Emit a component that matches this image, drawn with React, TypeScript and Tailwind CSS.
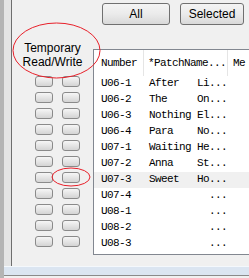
import React from "react";

const rows = [
  { num: "U06-1", a: "After", b: "Li..." },
  { num: "U06-2", a: "The", b: "On..." },
  { num: "U06-3", a: "Nothing", b: "El..." },
  { num: "U06-4", a: "Para", b: "No..." },
  { num: "U07-1", a: "Waiting", b: "He..." },
  { num: "U07-2", a: "Anna", b: "St..." },
  { num: "U07-3", a: "Sweet", b: "Ho..." },
  { num: "U07-4", a: "", b: "\u00a0\u00a0..." },
  { num: "U08-1", a: "", b: "\u00a0\u00a0..." },
  { num: "U08-2", a: "", b: "\u00a0\u00a0..." },
  { num: "U08-3", a: "", b: "\u00a0\u00a0..." },
];

const sans = "font-['Liberation_Sans',Arial,sans-serif]";
const mono = "font-['Liberation_Mono','Courier_New',monospace] text-[11px] tracking-[-0.6px]";

function SmallButton() {
  return (
    <div className="w-[18px] h-[11px] rounded-[3px] border border-[#8a8a8a] bg-gradient-to-b from-[#f6f6f6] to-[#d4d4d4]" />
  );
}

function WinButton({ label, width }: { label: string; width: string }) {
  return (
    <div
      className={`${width} h-[22px] rounded-[3px] border border-[#707070] bg-gradient-to-b from-[#f4f4f4] via-[#ebebeb] to-[#d9d9d9] flex items-center justify-center text-[12px] text-black ${sans}`}
    >
      {label}
    </div>
  );
}

export default function App() {
  return (
    <div className="relative w-[249px] h-[278px] overflow-hidden flex bg-[#f0f0f0]">
      {/* outer window edge */}
      <div className="w-[4px] h-full bg-[#b4b4b4] shrink-0" />

      <div className="flex-1 flex flex-col">
        <div className="h-[266px] flex">
          <div className="w-[7px] bg-[#e4e4e4] shrink-0" />
          <div className="w-[1px] bg-[#6e6e6e] shrink-0" />

          {/* left panel */}
          <div className="w-[81px] shrink-0 flex flex-col">
            <div className={`pt-[41px] text-center text-[12px] leading-[14px] text-black ${sans}`}>
              Temporary
              <br />
              Read/Write
            </div>
            <div className="mt-[7px] flex flex-col">
              {rows.map((r) => (
                <div key={r.num} className="h-[16px] flex gap-[9px] pl-[23px]">
                  <SmallButton />
                  <SmallButton />
                </div>
              ))}
            </div>
          </div>

          {/* right panel */}
          <div className="flex-1 flex flex-col">
            <div className="h-[49px] pt-[3px] pl-[9px] flex gap-[10px]">
              <WinButton label="All" width="w-[68px]" />
              <WinButton label="Selected" width="w-[64px]" />
            </div>

            <div className="h-[206px] border-l border-t border-b border-[#828790] bg-white flex flex-col">
              <div className={`h-[26px] flex items-center text-black ${mono}`}>
                <div className="w-[50px] pl-[7px] h-full flex items-center border-r border-[#e5e5e5]">Number</div>
                <div className="w-[84px] pl-[4px] h-full flex items-center border-r border-[#e5e5e5]">*PatchName...</div>
                <div className="pl-[5px] whitespace-nowrap">Me</div>
              </div>
              {rows.map((r) => (
                <div
                  key={r.num}
                  className={`h-[16px] flex items-start pt-[1px] leading-[12px] text-black whitespace-pre ${mono} ${r.num === "U07-3" ? "bg-[#f0f0f0]" : ""}`}
                >
                  <div className="w-[50px] pl-[7px] shrink-0">{r.num}</div>
                  <div className="w-[53px] pl-[5px] shrink-0">{r.a}</div>
                  <div>{r.b}</div>
                </div>
              ))}
            </div>
          </div>
        </div>

        {/* bottom edge */}
        <div className="h-[9px] bg-[#dbe5f1] border-t border-[#f4f8fc]" />
        <div className="h-[1px] bg-[#8a8a8a]" />
        <div className="flex-1 bg-[#f0f0f0]" />
      </div>

      {/* red annotation ellipses */}
      <svg className="absolute left-0 top-0 pointer-events-none" width="249" height="278">
        <ellipse cx="56.5" cy="50.5" rx="43.5" ry="27.5" fill="none" stroke="#e8202a" strokeWidth="1" />
        <ellipse cx="71" cy="177" rx="19" ry="9" fill="none" stroke="#e8202a" strokeWidth="1" />
      </svg>
    </div>
  );
}
